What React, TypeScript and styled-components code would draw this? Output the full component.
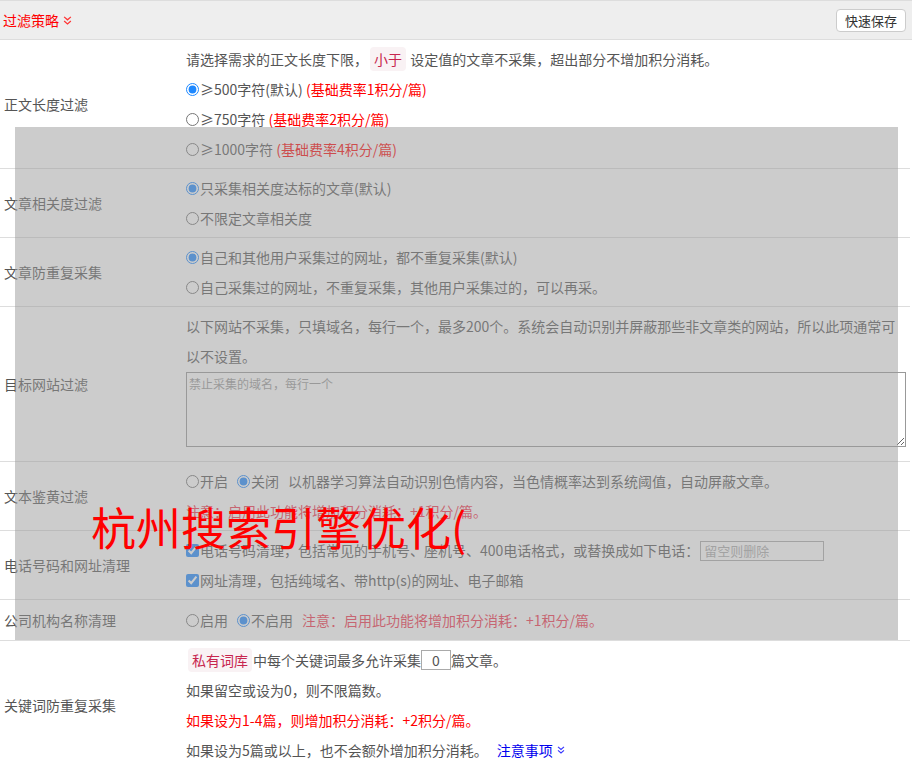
import React from "react";
import styled, { createGlobalStyle } from "styled-components";

const GlobalStyle = createGlobalStyle`
  body {
    margin: 0;
    background: #fff;
    font-family: "Noto Sans CJK SC", "Microsoft YaHei", sans-serif;
    font-size: 14px;
    color: #555;
  }
`;

const DoubleChevron = ({ color, size = 8 }: { color: string; size?: number }) => (
  <svg width={size} height={size} viewBox="0 0 8 8" style={{ marginLeft: 4 }}>
    <polyline points="1,0.8 4,3.4 7,0.8" fill="none" stroke={color} strokeWidth="1.1" />
    <polyline points="1,4.4 4,7 7,4.4" fill="none" stroke={color} strokeWidth="1.1" />
  </svg>
);

const App = () => {
  return (
    <S.Page>
      <GlobalStyle />
      <S.Header>
        <S.HeaderTitle>
          过滤策略
          <DoubleChevron color="#f33" size={9} />
        </S.HeaderTitle>
        <S.SaveButton>快速保存</S.SaveButton>
      </S.Header>

      <S.Table>
        <S.Row>
          <S.Label>正文长度过滤</S.Label>
          <S.Content>
            <S.Line>
              请选择需求的正文长度下限，<S.Tag>小于</S.Tag> 设定值的文章不采集，超出部分不增加积分消耗。
            </S.Line>
            <S.Line>
              <S.Radio name="len" defaultChecked />≥500字符(默认) <S.Red>(基础费率1积分/篇)</S.Red>
            </S.Line>
            <S.Line>
              <S.Radio name="len" />≥750字符 <S.Red>(基础费率2积分/篇)</S.Red>
            </S.Line>
            <S.Line>
              <S.Radio name="len" />≥1000字符 <S.Red>(基础费率4积分/篇)</S.Red>
            </S.Line>
          </S.Content>
        </S.Row>

        <S.Row>
          <S.Label>文章相关度过滤</S.Label>
          <S.Content>
            <S.Line>
              <S.Radio name="rel" defaultChecked />只采集相关度达标的文章(默认)
            </S.Line>
            <S.Line>
              <S.Radio name="rel" />不限定文章相关度
            </S.Line>
          </S.Content>
        </S.Row>

        <S.Row>
          <S.Label>文章防重复采集</S.Label>
          <S.Content>
            <S.Line>
              <S.Radio name="dup" defaultChecked />自己和其他用户采集过的网址，都不重复采集(默认)
            </S.Line>
            <S.Line>
              <S.Radio name="dup" />自己采集过的网址，不重复采集，其他用户采集过的，可以再采。
            </S.Line>
          </S.Content>
        </S.Row>

        <S.Row>
          <S.Label>目标网站过滤</S.Label>
          <S.Content>
            <S.Line>
              以下网站不采集，只填域名，每行一个，最多200个。系统会自动识别并屏蔽那些非文章类的网站，所以此项通常可
            </S.Line>
            <S.Line>以不设置。</S.Line>
            <S.Area placeholder="禁止采集的域名，每行一个" />
          </S.Content>
        </S.Row>

        <S.Row>
          <S.Label>文本鉴黄过滤</S.Label>
          <S.Content>
            <S.Line>
              <S.Option>
                <S.Radio name="porn" />开启
              </S.Option>
              <S.Option>
                <S.Radio name="porn" defaultChecked />关闭
              </S.Option>
              以机器学习算法自动识别色情内容，当色情概率达到系统阈值，自动屏蔽文章。
            </S.Line>
            <S.Line>
              <S.Notice>注意：启用此功能将增加积分消耗：+1积分/篇。</S.Notice>
            </S.Line>
          </S.Content>
        </S.Row>

        <S.Row>
          <S.Label>电话号码和网址清理</S.Label>
          <S.Content>
            <S.Line>
              <S.Check defaultChecked />电话号码清理，包括常见的手机号、座机号、400电话格式，或替换成如下电话：
              <S.PhoneInput placeholder="留空则删除" />
            </S.Line>
            <S.Line>
              <S.Check defaultChecked />网址清理，包括纯域名、带http(s)的网址、电子邮箱
            </S.Line>
          </S.Content>
        </S.Row>

        <S.Row $pad={5}>
          <S.Label>公司机构名称清理</S.Label>
          <S.Content>
            <S.Line>
              <S.Option>
                <S.Radio name="org" />启用
              </S.Option>
              <S.Option>
                <S.Radio name="org" defaultChecked />不启用
              </S.Option>
              <S.Notice>注意：启用此功能将增加积分消耗：+1积分/篇。</S.Notice>
            </S.Line>
          </S.Content>
        </S.Row>

        <S.Row>
          <S.Label>关键词防重复采集</S.Label>
          <S.Content>
            <S.Line>
              <S.Tag>私有词库</S.Tag>中每个关键词最多允许采集<S.CountInput defaultValue="0" />篇文章。
            </S.Line>
            <S.Line>如果留空或设为0，则不限篇数。</S.Line>
            <S.Line>
              <S.Red>如果设为1-4篇，则增加积分消耗：+2积分/篇。</S.Red>
            </S.Line>
            <S.Line>
              如果设为5篇或以上，也不会额外增加积分消耗。
              <S.Link>
                注意事项
                <DoubleChevron color="#33f" size={8} />
              </S.Link>
            </S.Line>
          </S.Content>
        </S.Row>
      </S.Table>

      <S.Mask />
      <S.Watermark>杭州搜索引擎优化(</S.Watermark>
    </S.Page>
  );
};

export default App;

const S = {
  Page: styled.div`
    position: relative;
    width: 912px;
    min-height: 768px;
    overflow: hidden;
  `,
  Header: styled.div`
    display: flex;
    justify-content: space-between;
    align-items: center;
    height: 38px;
    padding: 0 6px 0 3px;
    background: #eee;
    border-top: 1px solid #ddd;
    border-bottom: 1px solid #ddd;
  `,
  HeaderTitle: styled.div`
    display: flex;
    align-items: center;
    color: #f00;
    font-size: 14px;
  `,
  SaveButton: styled.button`
    height: 23px;
    padding: 0 8px;
    background: #fff;
    border: 1px solid #ccc;
    border-radius: 4px;
    font-family: inherit;
    font-size: 13px;
    color: #333;
    cursor: pointer;
  `,
  Table: styled.div`
    width: 910px;
  `,
  Row: styled.div<{ $pad?: number }>`
    display: grid;
    grid-template-columns: 186px 1fr;
    padding: ${(p) => p.$pad ?? 4}px 0;
    border-bottom: 1px solid #ddd;
  `,
  Label: styled.div`
    align-self: center;
    padding-left: 4px;
    color: #555;
  `,
  Content: styled.div``,
  Line: styled.div`
    height: 30px;
    line-height: 30px;
    white-space: nowrap;
  `,
  Tag: styled.span`
    padding: 2px 4px;
    margin: 0 1px 0 2px;
    background: #f9f2f4;
    color: #c7254e;
    border-radius: 4px;
  `,
  Red: styled.span`
    color: #f00;
  `,
  Notice: styled.span`
    color: #f2304a;
  `,
  Option: styled.label`
    margin-right: 9px;
  `,
  Radio: styled.input.attrs({ type: "radio" })`
    width: 13px;
    height: 13px;
    margin: 0 1px 0 0;
    vertical-align: -1px;
    accent-color: #1e88ff;
  `,
  Check: styled.input.attrs({ type: "checkbox" })`
    width: 13px;
    height: 13px;
    margin: 0 1px 0 0;
    vertical-align: -1px;
    accent-color: #1e88ff;
  `,
  Area: styled.textarea`
    display: block;
    box-sizing: border-box;
    width: 720px;
    height: 75px;
    margin: 1px 0 10px;
    padding: 2px;
    border: 1px solid #999;
    font-family: inherit;
    font-size: 12px;
    color: #555;
    &::placeholder {
      color: #999;
    }
  `,
  PhoneInput: styled.input`
    box-sizing: border-box;
    width: 124px;
    height: 20px;
    margin-left: 1px;
    padding: 0 3px;
    border: 1px solid #aaa;
    font-family: inherit;
    font-size: 13px;
    vertical-align: 0;
    &::placeholder {
      color: #aaa;
    }
  `,
  CountInput: styled.input`
    box-sizing: border-box;
    width: 30px;
    height: 20px;
    padding: 0;
    border: 1px solid #aaa;
    text-align: center;
    font-family: inherit;
    font-size: 14px;
    color: #555;
    vertical-align: 0;
  `,
  Link: styled.a`
    display: inline-flex;
    align-items: center;
    margin-left: 9px;
    color: #00e;
    text-decoration: none;
    cursor: pointer;
  `,
  Mask: styled.div`
    position: absolute;
    left: 15px;
    top: 127px;
    width: 883px;
    height: 513px;
    background: rgba(153, 153, 153, 0.5);
  `,
  Watermark: styled.div`
    position: absolute;
    left: 91px;
    top: 504px;
    font-size: 45px;
    line-height: 1;
    color: #f00;
    white-space: nowrap;
  `,
};
